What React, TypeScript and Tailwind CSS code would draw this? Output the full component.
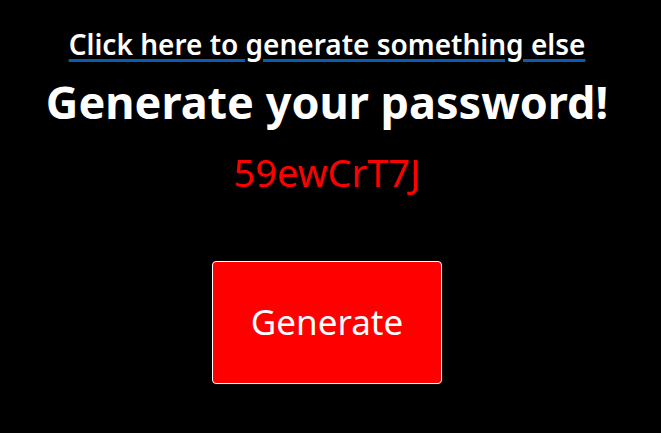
export default function App() {
  return (
    <div className="min-h-[433px] bg-black text-white flex flex-col items-center pt-[27px] pr-[7px] font-['Noto_Sans',sans-serif]">
      <a
        href="#"
        className="text-[28px] leading-[34px] font-semibold text-white underline decoration-[#0b5cad] decoration-[3px] underline-offset-[4px]"
      >
        Click here to generate something else
      </a>
      <h1 className="mt-[13px] text-[45px] leading-[56px] font-bold">Generate your password!</h1>
      <div className="mt-[18px] text-[38px] leading-[48px] text-[#ff0000]">59ewCrT7J</div>
      <button className="mt-[65px] w-[230px] h-[123px] bg-[#ff0000] border border-white rounded-[4px] text-[35px] text-white">
        Generate
      </button>
    </div>
  );
}
